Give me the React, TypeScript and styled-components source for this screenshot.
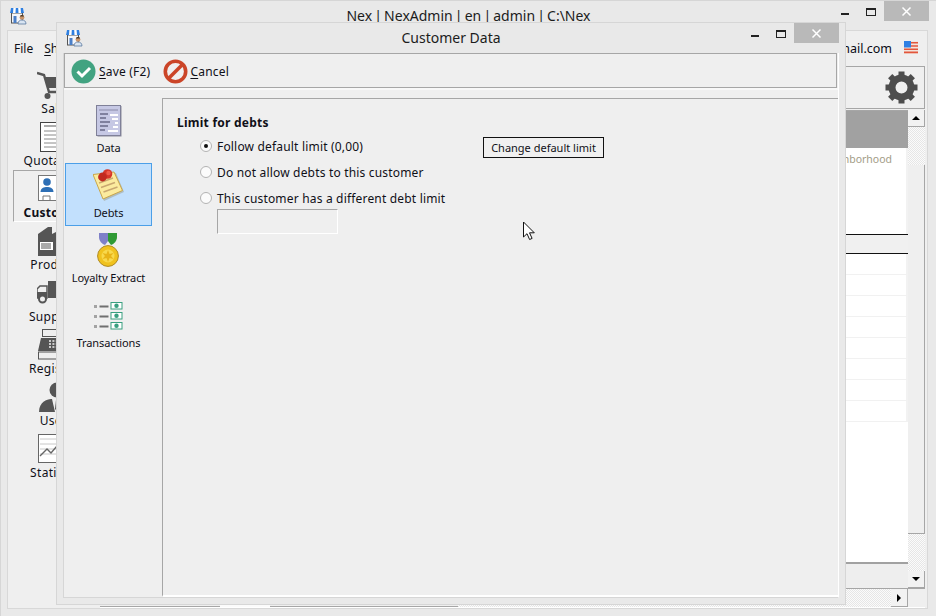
import React from "react";
import styled, { createGlobalStyle } from "styled-components";

const Global = createGlobalStyle`
  html, body { margin: 0; padding: 0; width: 936px; height: 616px; overflow: hidden; background: #e9e9e9; }
  * { box-sizing: border-box; }
  body { font-family: "Noto Sans", "Liberation Sans", sans-serif; font-size: 12px; color: #101018; }
`;

const checker = `repeating-conic-gradient(#e6e6e6 0 25%, #fbfbfb 0 50%) 0 0 / 2px 2px`;

const Desktop = styled.div`
  position: relative; width: 936px; height: 616px; background: #e9e9e9;
  border-top: 1px solid #d6d6d6; border-left: 1px solid #d6d6d6;
  display: flex; flex-direction: column; overflow: hidden;
`;
const TitleBar = styled.div<{ $h: number }>`
  height: ${p => p.$h}px; flex: none; display: flex; align-items: flex-start; position: relative; 
`;
const TitleIcon = styled.div<{ $l: number; $t: number }>`
  margin-left: ${p => p.$l}px; margin-top: ${p => p.$t}px; width: 17px; height: 18px; flex: none;
`;
const TitleText = styled.div<{ $size: number; $t: number; $c: number; $ws?: number }>`
  position: absolute; left: 0; right: 0; top: ${p => p.$t}px; padding-left: ${p => p.$c}px;
  text-align: center; font-size: ${p => p.$size}px; line-height: 18px; color: #1c1c1c; white-space: nowrap;
  word-spacing: ${p => p.$ws ?? 0}px;
`;
const Caption = styled.div<{ $r: number }>`
  margin-left: auto; margin-right: ${p => p.$r}px; display: flex; align-items: flex-start; flex: none; position: relative;
`;
const CapBtn = styled.div`
  width: 26px; height: 20px; display: flex; align-items: center; justify-content: center;
`;
const CapMin = styled.span`
  display: block; width: 8px; height: 2px; background: #222; margin-top: 6px;
`;
const CapMax = styled.span`
  display: block; width: 10px; height: 8px; border: 1px solid #222; border-top-width: 2px; margin-top: 2px;
`;
const CapClose = styled.div`
  width: 45px; height: 20px; background: #b9b9b9; display: flex; align-items: center; justify-content: center;
`;

const Client = styled.div`
  width: 921px; height: 579px; margin-left: 6px; flex: none; background: #efefef;
  border: 1px solid #d8d8d8; display: flex; flex-direction: column;
`;
const MenuBar = styled.div`
  height: 35px; flex: none; display: flex; align-items: center; padding: 0 0 1px 6px;
`;
const MenuItem = styled.span`
  margin-right: 11px; font-size: 12px;
  u { text-decoration: underline; text-underline-offset: 2px; }
`;
const Email = styled.span`
  margin-left: auto; font-size: 12.5px; color: #0a0a14;
`;
const Flag = styled.div`
  width: 14px; height: 13px; margin: 0 9px 2px 12px; flex: none;
`;
const MainRow = styled.div`
  flex: 1; display: flex; min-height: 0;
`;
const Sidebar = styled.div`
  width: 92px; flex: none; padding: 0 0 0 5px; 
`;
const SideItem = styled.div<{ $active?: boolean }>`
  height: 52px; width: 87px; display: flex; flex-direction: column; align-items: center; justify-content: flex-end;
  padding-bottom: ${p => (p.$active ? 0 : 1)}px; position: relative;
  font-size: 12px; letter-spacing: .3px; font-weight: ${p => (p.$active ? 700 : 400)};
  ${p => p.$active ? "border-left: 1px solid #a6a6a6; border-top: 1px solid #a6a6a6; border-bottom: 1px solid #fff;" : ""}
  svg { display: block; margin-bottom: ${p => (p.$active ? 3 : 1)}px; }
  span { line-height: 16px; }
`;
const Content = styled.div`
  flex: 1; display: flex; flex-direction: column; margin-right: 2px; min-width: 0;
`;
const TopBox = styled.div`
  height: 43px; flex: none; border: 1px solid #a6a6a6; background: #efefef; display: flex; align-items: center; justify-content: flex-end; padding-right: 6px; margin-bottom: 1px;
`;
const GridWrap = styled.div`
  flex: 1; display: flex; min-height: 0; 
`;
const Grid = styled.div`
  flex: 1; display: flex; flex-direction: column; background: #fff; min-width: 0; border-top: 1px solid #a6a6a6;
`;
const GridHead = styled.div`
  height: 37px; flex: none; background: #a1a1a1;
`;
const GridBody = styled.div`
  flex: 1; display: flex; flex-direction: column; min-height: 0; border-bottom: 2px solid #a1a1a1;
`;
const FirstRow = styled.div`
  height: 86px; flex: none; text-align: right; padding: 3px 14px 0 0; font-size: 10.5px; color: #a29c86; line-height: 16px; border-right: 2px solid #f2f2f2;
`;
const Band = styled.div`
  height: 20px; flex: none; background: #f0f0f0; border-top: 1px solid #111; border-bottom: 1px solid #111;
`;
const Row = styled.div`
  height: 21px; flex: none; border-bottom: 1px solid #f1f1f1; border-right: 2px solid #f2f2f2;
`;
const GridFoot = styled.div`
  height: 25px; flex: none; background: #eeeeee; border-bottom: 1px solid #a6a6a6;
`;
const VScroll = styled.div`
  width: 17px; flex: none; display: flex; flex-direction: column; background: #efefef; border-bottom: 1px solid #a6a6a6;
`;
const ScrollBtn = styled.div`
  height: 17px; flex: none; background: #f2f2f2; display: flex; align-items: center; justify-content: center;
  border-right: 1px solid #a6a6a6; border-bottom: 1px solid #a6a6a6; font-size: 0;
`;
const Checker = styled.div<{ $h: number }>`
  height: ${p => p.$h}px; flex: none; background: ${checker};
`;
const Track = styled.div`
  flex: 1; border-right: 1px solid #a6a6a6; border-bottom: 1px solid #a6a6a6; background: #efefef;
`;
const Tri = styled.span<{ $dir: "up" | "down" | "right" }>`
  display: block; width: 0; height: 0;
  ${p => p.$dir === "up" ? "border-left:4px solid transparent;border-right:4px solid transparent;border-bottom:4px solid #000;" : ""}
  ${p => p.$dir === "down" ? "border-left:4px solid transparent;border-right:4px solid transparent;border-top:4px solid #000;" : ""}
  ${p => p.$dir === "right" ? "border-top:4px solid transparent;border-bottom:4px solid transparent;border-left:4px solid #000;" : ""}
`;
const HScroll = styled.div`
  height: 19px; flex: none; display: flex; background: #fff; padding-bottom: 1px;
`;
const HThumb = styled.div<{ $w: number }>`
  width: ${p => p.$w}px; flex: none; background: #efefef; border-bottom: 1px solid #a6a6a6;
`;
const HGap = styled.div`
  width: 50px; flex: none; background: #fbfbfb;
`;
const HChecker = styled.div`
  flex: 1; background: ${checker}; 
`;
const HBtn = styled.div`
  width: 17px; flex: none; background: #f2f2f2; display: flex; align-items: center; justify-content: center; border-right: 1px solid #a6a6a6; border-bottom: 1px solid #a6a6a6;
`;
const Corner = styled.div`
  width: 17px; flex: none; background: #efefef;
`;

const Dialog = styled.div`
  position: absolute; left: 55px; top: 21px; width: 790px; height: 583px; background: #e9e9e9;
  border: 1px solid #d6d6d6; display: flex; flex-direction: column; 
`;
const DClient = styled.div`
  flex: 1; margin: 0 6px 6px 6px; min-height: 0; display: flex; flex-direction: column; background: #efefef;
  border-left: 1px solid #d6d6d6; border-bottom: 1px solid #d6d6d6; border-right: 1px solid #fff;
`;
const Toolbar = styled.div`
  height: 35px; flex: none; margin-right: 1px; border: 1px solid #a6a6a6; display: flex; align-items: center; padding: 1px 0 0 6px; background: #efefef;
`;
const ToolBtn = styled.div<{ $gap: number }>`
  display: flex; align-items: center; font-size: 12px; letter-spacing: .2px; margin-right: 13px; 
  svg { margin-right: ${p => p.$gap}px; }
  u { text-decoration: underline; text-underline-offset: 2px; }
`;
const DBody = styled.div`
  flex: 1; display: flex; min-height: 0; border-top: 2px solid #f8f8f8; 
`;
const Nav = styled.div`
  width: 98px; flex: none; padding: 8px 0 0 1px; display: flex; flex-direction: column; gap: 2px;
`;
const NavItem = styled.div<{ $active?: boolean; $top: number }>`
  width: 87px; height: 63px; flex: none; display: flex; flex-direction: column; align-items: center; position: relative;
  border: 1px solid ${p => (p.$active ? "#4b9fe8" : "transparent")}; background: ${p => (p.$active ? "#c2e0fd" : "transparent")};
  padding-top: ${p => p.$top}px; font-size: 11px; letter-spacing: -.1px;
  svg { display: block; }
  span { position: absolute; left: 0; right: 0; top: 41px; text-align: center; line-height: 16px; white-space: nowrap; }
`;
const Panel = styled.div`
  flex: 1; margin-top: 8px; border-left: 1px solid #a6a6a6; border-top: 1px solid #a6a6a6; border-bottom: 2px solid #fff; padding: 16px 0 0 14px;
`;
const Heading = styled.div`
  font-weight: 700; font-size: 12px; letter-spacing: .25px; line-height: 16px; margin-bottom: 2px;
`;
const RadioList = styled.div`
  padding-left: 23px; display: flex; flex-direction: column;
`;
const RadioRow = styled.div`
  height: 26px; display: flex; align-items: center; font-size: 12px; letter-spacing: .18px;
`;
const Radio = styled.span<{ $on?: boolean }>`
  width: 12px; height: 12px; border-radius: 50%; background: #fbfbfb; border: 1px solid #b3b3b3; margin-right: 5px; flex: none;
  display: flex; align-items: center; justify-content: center;
  &::after { content: ""; width: 4px; height: 4px; border-radius: 50%; background: ${p => (p.$on ? "#111" : "transparent")}; }
`;
const RadioLabel = styled.span`
  width: 266px; flex: none; white-space: nowrap;
`;
const Button = styled.div`
  width: 121px; height: 21px; border: 1px solid #111; background: #f0f0f0; display: flex; align-items: center; justify-content: center; font-size: 11px; letter-spacing: 0; white-space: nowrap; margin-top: 3px;
`;
const LimitInput = styled.div`
  width: 121px; height: 25px; margin: -2px 0 0 17px; border: 1px solid; border-color: #a6a6a6 #fff #fff #a6a6a6;
`;
const Cursor = styled.div`
  position: absolute; left: 521px; top: 220px; width: 14px; height: 20px;
`;

const X = () => (
  <svg width="11" height="11" viewBox="0 0 11 11"><path d="M1.5 1.5l8 8M9.5 1.5l-8 8" stroke="#fff" strokeWidth="1.5" /></svg>
);

const StoreIcon = () => (
  <svg width="17" height="18" viewBox="0 0 17 18">
    <rect x="1.5" y="6" width="11" height="10" fill="#f4f6fa" stroke="#555" />
    <rect x="3.5" y="9" width="3" height="7" fill="#4a7fc8" />
    <path d="M1 1h12l1 5H0z" fill="#fff" />
    <path d="M1 1h2.4l-.4 5H0zM5.8 1h2.4l.3 5H5.5zM10.6 1H13l1 5h-3z" fill="#2f7fe0" />
    <circle cx="12" cy="10.5" r="2.4" fill="#c99469" />
    <path d="M10 9.5c0-2 4-2 4 0z" fill="#4a3a2a" />
    <path d="M8 17c0-3 2-4 4-4s4 1 4 4z" fill="#d8e4f2" stroke="#5c7aa0" strokeWidth=".8" />
  </svg>
);

const FlagIcon = () => (
  <svg width="14" height="13" viewBox="0 0 14 13">
    <rect width="14" height="13" fill="#f3e4dc" />
    <path d="M0 1h14v1.6H0zM0 4.2h14v1.6H0zM0 7.4h14V9H0zM0 10.6h14v1.6H0z" fill="#e2563c" />
    <rect width="7" height="6.5" fill="#2f80e4" />
  </svg>
);

const Gear = () => {
  const teeth = [0, 45, 90, 135, 180, 225, 270, 315];
  return (
    <svg width="33" height="33" viewBox="0 0 33 33">
      {teeth.map(a => <rect key={a} x="13.5" y="0.5" width="6" height="7" fill="#4d4d4d" transform={`rotate(${a} 16.5 16.5)`} />)}
      <circle cx="16.5" cy="16.5" r="9.5" fill="none" stroke="#4d4d4d" strokeWidth="7" />
    </svg>
  );
};

const SaveIcon = () => (
  <svg width="25" height="25" viewBox="0 0 25 25">
    <circle cx="12.5" cy="12.5" r="12" fill="#42a381" />
    <path d="M6.5 12.5l4.5 4.5 8-8" fill="none" stroke="#fff" strokeWidth="3" />
  </svg>
);
const CancelIcon = () => (
  <svg width="25" height="25" viewBox="0 0 25 25">
    <circle cx="12.5" cy="12.5" r="10.2" fill="#f0f0f0" stroke="#cb4528" strokeWidth="3.6" />
    <path d="M5.5 19.5l14-14" stroke="#cb4528" strokeWidth="3.6" />
  </svg>
);

const DataIcon = () => (
  <svg width="26" height="32" viewBox="0 0 26 32">
    <rect x="1.5" y="1" width="24" height="30.5" fill="#8c8c9c" />
    <rect x="0.5" y="0.5" width="24" height="30" fill="#c6c8e4" stroke="#7f8098" />
    <path d="M3 5h19" stroke="#8a8aa8" />
    <path d="M4 9h8M4 13h6M4 17h10M4 21h8M4 25h5" stroke="#3a3a5a" strokeWidth="1.2" />
    <path d="M14 9h8v2h-8zM16 13h6v2h-6zM19 17h3v2h-3zM17 21h5v2h-5zM12 25h10v2H12z" fill="#fff" />
  </svg>
);
const DebtsIcon = () => (
  <svg width="32" height="32" viewBox="0 0 32 32">
    <path d="M2 7l21-3 8 19-20 9z" fill="#8a7a50" opacity=".35" />
    <path d="M0 5.5l21-2.5 8.5 18.5L10 30z" fill="#fbeb9e" stroke="#c9a64a" />
    <path d="M6 14l14-5M8 18.5l14-5M10.5 23l14-5" stroke="#c9a870" strokeWidth="1.5" />
    <circle cx="14.5" cy="5" r="4.8" fill="#d6362a" />
    <circle cx="9.5" cy="8" r="4.4" fill="#c12a20" />
    <circle cx="15.5" cy="4" r="2.2" fill="#ee5a4a" />
  </svg>
);
const MedalIcon = () => (
  <svg width="24" height="34" viewBox="0 0 24 34">
    <path d="M2 0h9v8l-3 4C5 11 2 8 2 4z" fill="#7e80c8" />
    <path d="M11 0h9v4c0 4-3 7-6 8l-3-4z" fill="#2f9a35" />
    <circle cx="11" cy="23" r="10.4" fill="#f0c21e" stroke="#b08a20" />
    <circle cx="11" cy="23" r="6.5" fill="#f8d94c" />
    <path d="M11 17l1.5 4 4-1-2.5 3 2.5 3-4-1-1.5 4-1.5-4-4 1 2.5-3-2.5-3 4 1z" fill="#e8b418" />
  </svg>
);
const TransIcon = () => (
  <svg width="30" height="28" viewBox="0 0 30 28">
    {[0, 10, 20].map(y => (
      <g key={y}>
        <rect x="0" y={y + 3} width="3" height="3" fill="#a3a3a3" />
        <rect x="5.5" y={y + 3.5} width="9" height="2" fill="#6f6f6f" />
        <rect x="17" y={y + 0.5} width="11" height="6.5" fill="#fff" stroke="#3aa080" />
        <circle cx="22.5" cy={y + 3.8} r="2.2" fill="#3aa080" />
      </g>
    ))}
  </svg>
);

const d = "#555";
const CartIcon = () => (
  <svg width="40" height="30" viewBox="0 0 40 30">
    <path d="M0 3l7 2 5 17h20" fill="none" stroke={d} strokeWidth="2.4" />
    <path d="M8 7h28l-3 11H11z" fill={d} />
    <circle cx="10.5" cy="26" r="3" fill={d} /><circle cx="30" cy="26" r="3" fill={d} />
  </svg>
);
const QuoteIcon = () => (
  <svg width="34" height="31" viewBox="0 0 34 31">
    <rect x=".5" y="1.5" width="28" height="29" fill="#fff" stroke="#444" />
    <path d="M4 5h12" stroke="#888" strokeWidth="1.4" />
    <path d="M4 10h21M4 14h21M4 18h21M4 22h21M4 26h21" stroke="#8a8a8a" />
  </svg>
);
const CustIcon = () => (
  <svg width="38" height="27" viewBox="0 0 38 27">
    <rect x=".5" y=".5" width="30" height="25" fill="#fff" stroke="#777" />
    <circle cx="9" cy="7" r="3.8" fill="#2d6fb5" />
    <path d="M2.5 17c0-4 3.5-5 6.5-5s6.5 1 6.5 5z" fill="#2d6fb5" />
    <path d="M5 26v-5h7v5" fill="none" stroke="#777" />
  </svg>
);
const BoxIcon = () => (
  <svg width="38" height="29" viewBox="0 0 38 29">
    <path d="M0 7l10-7h20l4 7v22H0z" fill={d} />
    <path d="M14 0h8v7l-4-2-4 2z" fill="#efefef" />
    <rect x="2" y="15" width="13" height="8" fill="#fff" />
    <path d="M4 16v6M6 16v6M8 16v6M10 16v6M12 16v6" stroke={d} />
  </svg>
);
const TruckIcon = () => (
  <svg width="40" height="27" viewBox="0 0 40 27">
    <path d="M11 0h27v17H11z" fill={d} />
    <path d="M0 8l3-3h7v12H0z" fill="none" stroke={d} strokeWidth="1.5" />
    <path d="M0 11h10v6H0z" fill={d} />
    <circle cx="5.5" cy="18" r="3.5" fill="#efefef" stroke={d} strokeWidth="2" />
  </svg>
);
const RegIcon = () => (
  <svg width="38" height="31" viewBox="0 0 38 31">
    <rect x="4.5" y=".5" width="26" height="7" fill="#efefef" stroke={d} />
    <path d="M3 9h30l3 13H0z" fill={d} />
    <rect x=".5" y="23" width="36" height="7" fill="#efefef" stroke={d} />
    <path d="M11 12h11M11 15h11M11 18h11" stroke="#efefef" strokeWidth="1.4" strokeDasharray="2 1.4" />
  </svg>
);
const UserIcon = () => (
  <svg width="38" height="30" viewBox="0 0 38 30">
    <circle cx="19" cy="8" r="7.5" fill={d} />
    <path d="M1 30c0-10 8-13 12-13h12c4 0 12 3 12 13z" fill={d} />
    <path d="M14 17h10l-3 13h-4z" fill="#efefef" />
    <path d="M18 18h2l1 9-2 2-2-2z" fill={d} />
  </svg>
);
const StatIcon = () => (
  <svg width="38" height="30" viewBox="0 0 38 30">
    <rect x=".5" y=".5" width="36" height="28" fill="#fff" stroke="#666" />
    <path d="M2 5h32M2 10h32M2 15h32M2 20h32" stroke="#c8c8c8" />
    <path d="M2 22l7-7 4 4 6-7 5 4 8-8" fill="none" stroke="#666" strokeWidth="1.4" />
  </svg>
);

const ArrowCursor = () => (
  <svg width="14" height="20" viewBox="0 0 14 20">
    <path d="M1.5 1v15l3.5-3.3 2.6 5.8 2.5-1.1-2.6-5.6h4.8z" fill="#fff" stroke="#111" />
  </svg>
);

const sideItems = [
  { label: "Sales", icon: <CartIcon /> },
  { label: "Quotations", icon: <QuoteIcon /> },
  { label: "Customers", icon: <CustIcon />, active: true },
  { label: "Products", icon: <BoxIcon /> },
  { label: "Suppliers", icon: <TruckIcon /> },
  { label: "Registers", icon: <RegIcon /> },
  { label: "Users", icon: <UserIcon /> },
  { label: "Statistics", icon: <StatIcon /> },
];

const navItems = [
  { label: "Data", icon: <DataIcon />, top: 6 },
  { label: "Debts", icon: <DebtsIcon />, top: 5, active: true },
  { label: "Loyalty Extract", icon: <MedalIcon />, top: 4 },
  { label: "Transactions", icon: <TransIcon />, top: 8 },
];

export default function App() {
  return (
    <Desktop>
      <Global />
      <TitleBar $h={29}>
        <TitleIcon $l={9} $t={6}><StoreIcon /></TitleIcon>
        <TitleText $size={14} $t={6} $c={0} $ws={-1.5}>Nex | NexAdmin | en | admin | C:\Nex</TitleText>
        <Caption $r={7}>
          <CapBtn><CapMin /></CapBtn>
          <CapBtn><CapMax /></CapBtn>
          <CapClose><X /></CapClose>
        </Caption>
      </TitleBar>
      <Client>
        <MenuBar>
          <MenuItem>File</MenuItem>
          <MenuItem><u>S</u>how</MenuItem>
          <Email>support@nexgmail.com</Email>
          <Flag><FlagIcon /></Flag>
        </MenuBar>
        <MainRow>
          <Sidebar>
            {sideItems.map(s => (
              <SideItem key={s.label} $active={s.active}>
                {s.icon}
                <span>{s.label}</span>
              </SideItem>
            ))}
          </Sidebar>
          <Content>
            <TopBox><Gear /></TopBox>
            <GridWrap>
              <Grid>
                <GridHead />
                <GridBody>
                  <FirstRow>Neighborhood</FirstRow>
                  <Band />
                  {Array.from({ length: 8 }, (_, i) => <Row key={i} />)}
                </GridBody>
                <GridFoot />
              </Grid>
              <VScroll>
                <ScrollBtn><Tri $dir="up" /></ScrollBtn>
                <Checker $h={38} />
                <Track />
                <Checker $h={37} />
                <ScrollBtn><Tri $dir="down" /></ScrollBtn>
              </VScroll>
            </GridWrap>
            <HScroll>
              <HThumb $w={120} />
              <HGap />
              <HThumb $w={188} />
              <HChecker />
              <HBtn><Tri $dir="right" /></HBtn>
              <Corner />
            </HScroll>
          </Content>
        </MainRow>
      </Client>

      <Dialog>
        <TitleBar $h={30}>
          <TitleIcon $l={9} $t={6}><StoreIcon /></TitleIcon>
          <TitleText $size={14} $t={6} $c={-1}>Customer Data</TitleText>
          <Caption $r={6}>
            <CapBtn><CapMin /></CapBtn>
            <CapBtn><CapMax /></CapBtn>
            <CapClose><X /></CapClose>
          </Caption>
        </TitleBar>
        <DClient>
          <Toolbar>
            <ToolBtn $gap={3}><SaveIcon /><span><u>S</u>ave (F2)</span></ToolBtn>
            <ToolBtn $gap={2}><CancelIcon /><span><u>C</u>ancel</span></ToolBtn>
          </Toolbar>
          <DBody>
            <Nav>
              {navItems.map(n => (
                <NavItem key={n.label} $active={n.active} $top={n.top}>
                  {n.icon}
                  <span>{n.label}</span>
                </NavItem>
              ))}
            </Nav>
            <Panel>
              <Heading>Limit for debts</Heading>
              <RadioList>
                <RadioRow>
                  <Radio $on />
                  <RadioLabel>Follow default limit (0,00)</RadioLabel>
                  <Button>Change default limit</Button>
                </RadioRow>
                <RadioRow><Radio /><RadioLabel>Do not allow debts to this customer</RadioLabel></RadioRow>
                <RadioRow><Radio /><RadioLabel>This customer has a different debt limit</RadioLabel></RadioRow>
                <LimitInput />
              </RadioList>
            </Panel>
          </DBody>
        </DClient>
      </Dialog>
      <Cursor><ArrowCursor /></Cursor>
    </Desktop>
  );
}
